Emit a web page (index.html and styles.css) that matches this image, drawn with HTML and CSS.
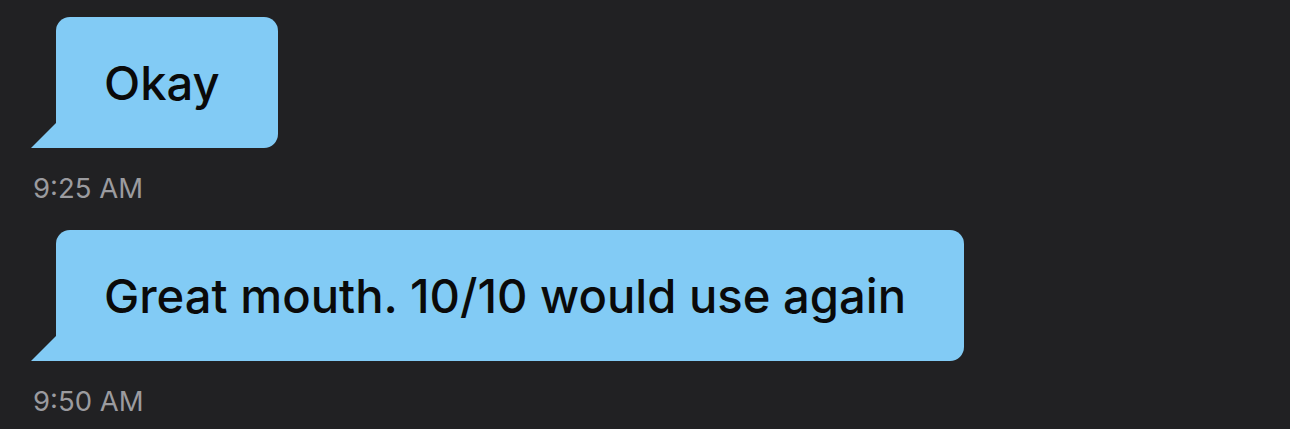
FILE: index.html
```html
<!DOCTYPE html>
<html>
<head>
<meta charset="utf-8">
<link rel="stylesheet" href="styles.css">
</head>
<body>
<main class="thread">
  <div class="message">
    <div class="bubble"><span class="text">Okay</span></div>
    <div class="time">9:25 AM</div>
  </div>
  <div class="message">
    <div class="bubble"><span class="text">Great mouth. 10/10 would use again</span></div>
    <div class="time">9:50 AM</div>
  </div>
</main>
</body>
</html>
```
FILE: styles.css
```css
html, body {
  margin: 0;
  padding: 0;
  background: #212123;
  height: 100%;
}

.thread {
  display: flex;
  flex-direction: column;
  gap: 26px;
  padding: 17px 0 0 31px;
  font-family: Inter, "Noto Sans", sans-serif;
}

.message {
  display: flex;
  flex-direction: column;
  align-items: flex-start;
}

.bubble {
  position: relative;
  margin-left: 25px;
  height: 131px;
  display: flex;
  align-items: center;
  padding: 0 58px 0 48px;
  background: #82cbf5;
  border-radius: 14px 14px 14px 0;
  color: #0a0a0a;
  font-size: 47.2px;
  font-weight: 500;
}

/* speech tail at the bottom-left corner */
.bubble::before {
  content: "";
  position: absolute;
  left: -25px;
  bottom: 0;
  width: 0;
  height: 0;
  border-style: solid;
  border-width: 0 0 25px 25px;
  border-color: transparent transparent #82cbf5 transparent;
}

.time {
  margin-top: 24px;
  margin-left: 2px;
  color: #9b9b9f;
  font-size: 27.5px;
  line-height: 32px;
}
```
